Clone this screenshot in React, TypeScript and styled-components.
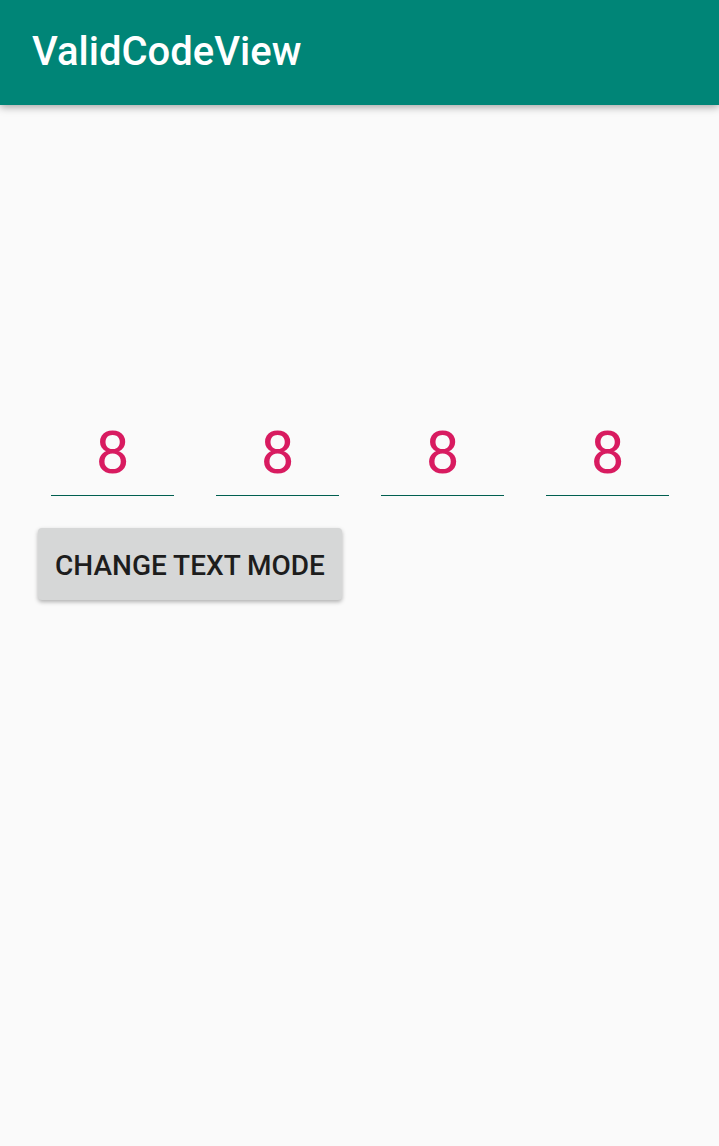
import React, { useState } from "react";
import styled, { createGlobalStyle } from "styled-components";

const GlobalStyle = createGlobalStyle`
  *, *::before, *::after { box-sizing: border-box; }
  html, body { margin: 0; background: #fafafa; }
  body, input, button { font-family: Roboto, "Liberation Sans", sans-serif; }
`;

const Screen = styled.div`
  min-height: 100vh;
  background: #fafafa;
`;

const AppBar = styled.header`
  display: flex;
  align-items: center;
  height: 105px;
  padding: 0 32px 2px;
  background: #008577;
  box-shadow: 0 2px 8px rgba(0, 0, 0, 0.36);
`;

const Title = styled.h1`
  margin: 0;
  color: #ffffff;
  font-size: 40px;
  font-weight: 500;
  line-height: 48px;
`;

const Content = styled.main`
  display: flex;
  flex-direction: column;
  align-items: flex-start;
  gap: 32px;
  padding: 304px 38px 0;
`;

const CodeRow = styled.div`
  display: grid;
  grid-template-columns: repeat(4, 1fr);
  gap: 42px;
  width: 100%;
  padding: 0 12px 0 13px;
`;

const Digit = styled.input<{ $hidden: boolean }>`
  width: 100%;
  min-width: 0;
  height: 87px;
  padding: 0;
  border: 0;
  border-bottom: 1px solid #005f50;
  border-radius: 0;
  outline: 0;
  background: transparent;
  color: #d81b60;
  font-size: 60px;
  line-height: 70px;
  text-align: center;
  -webkit-text-security: ${(p) => (p.$hidden ? "disc" : "none")};
`;

const ModeButton = styled.button`
  min-width: 304px;
  height: 72px;
  padding: 4px 16px 0;
  border: 0;
  border-radius: 4px;
  background: #d6d7d7;
  box-shadow: 0 2px 4px rgba(0, 0, 0, 0.3);
  color: #1d1d1d;
  font-size: 28px;
  font-weight: 500;
  line-height: 32px;
  text-transform: uppercase;
  cursor: pointer;
`;

export default function App() {
  const [digits, setDigits] = useState(["8", "8", "8", "8"]);
  const [hidden, setHidden] = useState(false);

  const update = (index: number, value: string) =>
    setDigits((prev) => prev.map((d, i) => (i === index ? value : d)));

  return (
    <Screen>
      <GlobalStyle />
      <AppBar>
        <Title>ValidCodeView</Title>
      </AppBar>
      <Content>
        <CodeRow role="group" aria-label="Verification code">
          {digits.map((digit, i) => (
            <Digit
              key={i}
              $hidden={hidden}
              aria-label={`Digit ${i + 1}`}
              inputMode="numeric"
              maxLength={1}
              value={digit}
              onChange={(e) => update(i, e.target.value)}
            />
          ))}
        </CodeRow>
        <ModeButton type="button" onClick={() => setHidden((h) => !h)}>
          Change text mode
        </ModeButton>
      </Content>
    </Screen>
  );
}
